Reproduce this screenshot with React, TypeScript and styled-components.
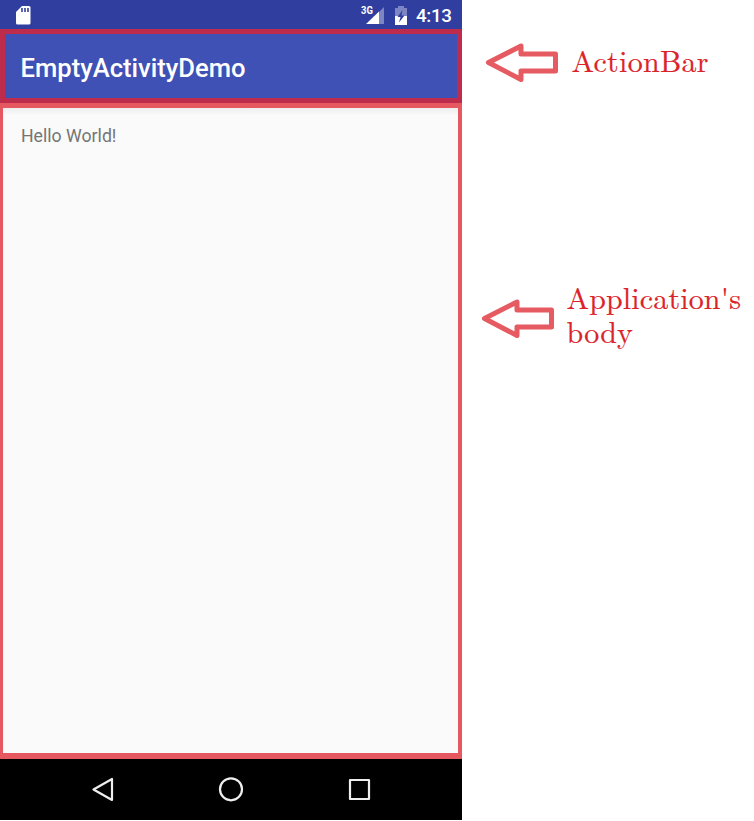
import React from 'react';
import styled, { createGlobalStyle } from 'styled-components';

const GlobalStyle = createGlobalStyle`
  * { box-sizing: border-box; }
  body { margin: 0; background: #fff; overflow: hidden; }
`;

const Page = styled.main`
  display: flex;
  width: 754px;
  height: 821px;
  background: #fff;
`;

const Phone = styled.section`
  display: flex;
  flex-direction: column;
  width: 462px;
  height: 820px;
  font-family: Roboto, sans-serif;
`;

const StatusBar = styled.div`
  display: flex;
  justify-content: space-between;
  height: 29px;
  flex: none;
  background: #303f9f;
`;

const StatusIcon = styled.svg`
  display: block;
  flex: none;
`;

const StatusGroup = styled.div`
  display: flex;
`;

const Network = styled.span`
  width: 13px;
  padding-top: 4px;
  color: #fff;
  font-size: 11px;
  line-height: 13px;
  font-weight: 700;
  transform: scaleX(0.86);
  transform-origin: left;
`;

const Clock = styled.time`
  width: 46px;
  color: #fff;
  font-size: 18.8px;
  font-weight: 500;
  line-height: 32px;
  letter-spacing: -0.35px;
`;

const ActionBar = styled.header`
  height: 74px;
  flex: none;
  padding: 0 15.5px;
  border: 5px solid #be2c4d;
  background: #3f51b5;
  color: #fff;
  font-size: 25.6px;
  font-weight: 500;
  line-height: 68px;
`;

const Body = styled.div`
  flex: 1;
  padding: 18px;
  border: solid #e55860;
  border-width: 5px 4px 6px 3px;
  background: linear-gradient(#eeeeee, #fafafa 7px);
  color: #757575;
  font-size: 17.7px;
  line-height: 21px;
`;

const NavBar = styled.nav`
  display: flex;
  height: 61px;
  flex: none;
  background: #000;
`;

const NavIcons = styled.svg`
  display: block;
  fill: none;
  stroke: #eee;
  stroke-width: 2.2;
  stroke-linejoin: round;
`;

const Annotations = styled.aside`
  display: flex;
  flex-direction: column;
  width: 292px;
`;

const Annotation = styled.div<{ $top: number; $left: number }>`
  display: flex;
  align-items: flex-start;
  height: 76px;
  margin: ${({ $top }) => $top}px 0 0 ${({ $left }) => $left}px;
`;

const ArrowIcon = styled.svg`
  display: block;
  flex: none;
  margin-top: 13px;
  fill: none;
  stroke: #e65a62;
  stroke-width: 5;
  stroke-linejoin: round;
`;

const Label = styled.div<{ $gap: number; $top: number; $tracking: number }>`
  margin: ${({ $top }) => $top}px 0 0 ${({ $gap }) => $gap}px;
  color: #db232a;
  font-family: "Latin Modern Roman", "Liberation Serif", serif;
  font-size: 30px;
  line-height: 34px;
  letter-spacing: ${({ $tracking }) => $tracking}px;
  white-space: nowrap;
  -webkit-text-stroke: 0.2px #db232a;
`;

const Arrow = () => (
  <ArrowIcon width="74" height="42" viewBox="0 0 74 42">
    <path d="M4.5 20.5 37 4V12H71.5V29H37V37.5Z" />
  </ArrowIcon>
);

export default function App() {
  return (
    <>
      <GlobalStyle />
      <Page>
        <Phone>
          <StatusBar>
            <StatusIcon width="40" height="29" viewBox="0 0 40 29">
              <path d="M22 6H29Q30.5 6 30.5 7.5V23Q30.5 24.5 29 24.5H17.5Q16 24.5 16 23V12Z" fill="#fff" />
              <path d="M22 8V12M25 8V12M28 8V12" stroke="#303f9f" strokeWidth="1.6" />
            </StatusIcon>
            <StatusGroup>
              <Network>3G</Network>
              <StatusIcon width="42" height="29" viewBox="374 0 42 29" overflow="visible">
                <path d="M384 7V24H379V12Z" fill="#7d86c3" />
                <path d="M366 24 379 11.5V24Z" fill="#fff" />
                <path d="M398 6H404V8H407V16H395V8H398Z" fill="#7d86c3" />
                <path d="M395 16H407V25H395Z" fill="#fff" />
                <path d="M402.5 10 397.5 17H400.5L399 22.5 404.5 15.5H401.5Z" fill="#303f9f" />
              </StatusIcon>
              <Clock>4:13</Clock>
            </StatusGroup>
          </StatusBar>
          <ActionBar>EmptyActivityDemo</ActionBar>
          <Body>Hello World!</Body>
          <NavBar>
            <NavIcons width="462" height="61" viewBox="0 759 462 61">
              <path d="M93.5 789.5 112 779V800Z" />
              <circle cx="231" cy="789.3" r="11" />
              <rect x="350" y="780" width="19" height="19" />
            </NavIcons>
          </NavBar>
        </Phone>
        <Annotations>
          <Annotation $top={29} $left={22}>
            <Arrow />
            <Label $gap={13.5} $top={14} $tracking={0.3}>ActionBar</Label>
          </Annotation>
          <Annotation $top={180} $left={18}>
            <Arrow />
            <Label $gap={12.5} $top={-5} $tracking={0.15}>Application's<br />body</Label>
          </Annotation>
        </Annotations>
      </Page>
    </>
  );
}
